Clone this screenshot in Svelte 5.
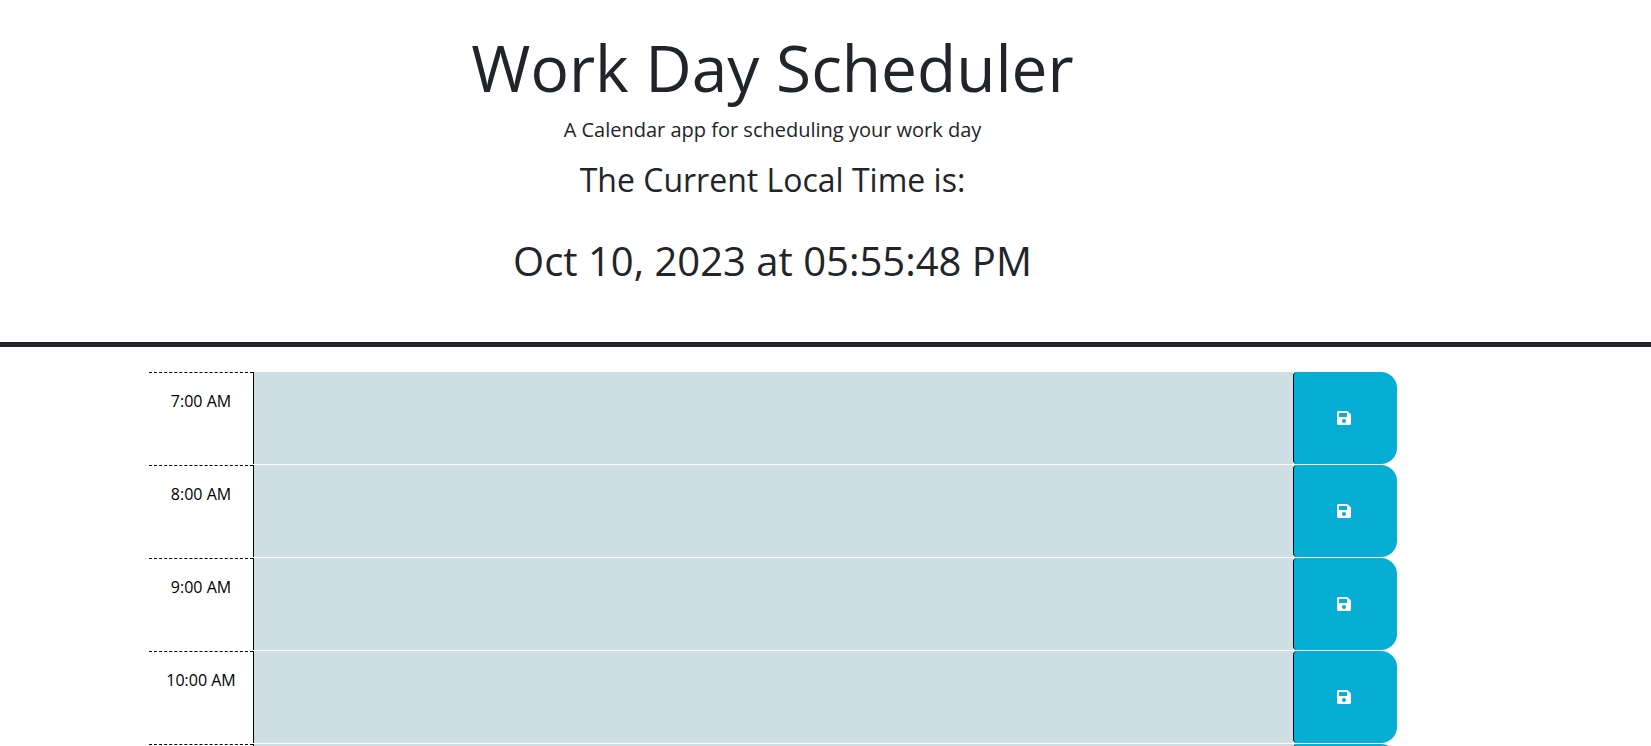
<script>
  const hours = ['7:00 AM', '8:00 AM', '9:00 AM', '10:00 AM', '11:00 AM'];
  let notes = $state(hours.map(() => ''));
</script>

<div class="page">
  <header>
    <h1>Work Day Scheduler</h1>
    <p class="lead">A Calendar app for scheduling your work day</p>
    <p class="label">The Current Local Time is:</p>
    <p class="time">Oct 10, 2023 at 05:55:48 PM</p>
  </header>
  <main>
    {#each hours as hour, i}
      <div class="row">
        <label class="hour" for="note-{i}">{hour}</label>
        <textarea id="note-{i}" bind:value={notes[i]}></textarea>
        <button aria-label="save">
          <svg viewBox="0 32 448 448" width="14" height="14" aria-hidden="true"><path fill="currentColor" d="M433.941 129.941l-83.882-83.882A48 48 0 0 0 316.118 32H48C21.49 32 0 53.49 0 80v352c0 26.51 21.49 48 48 48h352c26.51 0 48-21.49 48-48V163.882a48 48 0 0 0-14.059-33.941zM224 416c-35.346 0-64-28.654-64-64 0-35.346 28.654-64 64-64s64 28.654 64 64c0 35.346-28.654 64-64 64zm96-304.52V212c0 6.627-5.373 12-12 12H76c-6.627 0-12-5.373-12-12V108c0-6.627 5.373-12 12-12h228.52c3.183 0 6.235 1.264 8.485 3.515l3.48 3.48A11.996 11.996 0 0 1 320 111.48z"/></svg>
        </button>
      </div>
    {/each}
  </main>
</div>

<style>
  :global(html) { scrollbar-width: none; }
  :global(body) { margin: 0; background: #fff; }
  .page {
    color: #212529;
    font: 16px/24px "Open Sans", sans-serif;
  }
  header {
    padding: 30px 106px 51px 0;
    border-bottom: 5px solid #212529;
    text-align: center;
  }
  h1, p { margin: 0; font-weight: 400; }
  h1 { font-size: 64px; line-height: 75px; margin-bottom: 10px; }
  .lead { font-size: 20px; line-height: 30px; margin-bottom: 16px; }
  .label { font-size: 32px; line-height: 38px; margin-bottom: 32px; }
  .time { font-size: 40px; line-height: 60px; }
  main { padding: 25px 254px 0 149px; }
  .row {
    display: grid;
    grid-template-columns: 1fr 10fr 1fr;
    height: 92px;
    margin-bottom: 1px;
  }
  .hour {
    border-top: 1px dashed #000;
    padding-top: 16px;
    color: #000;
    text-align: center;
  }
  textarea {
    resize: none;
    border: 0;
    border-left: 1px solid #000;
    background: #cddee5;
    font: inherit;
    padding: 8px;
  }
  button {
    display: flex;
    align-items: center;
    justify-content: center;
    padding: 0 3px 0 0;
    border: 0;
    border-left: 1px solid #000;
    border-radius: 4px 16px 16px 4px;
    background: #06aed5;
    color: #fff;
  }
</style>
